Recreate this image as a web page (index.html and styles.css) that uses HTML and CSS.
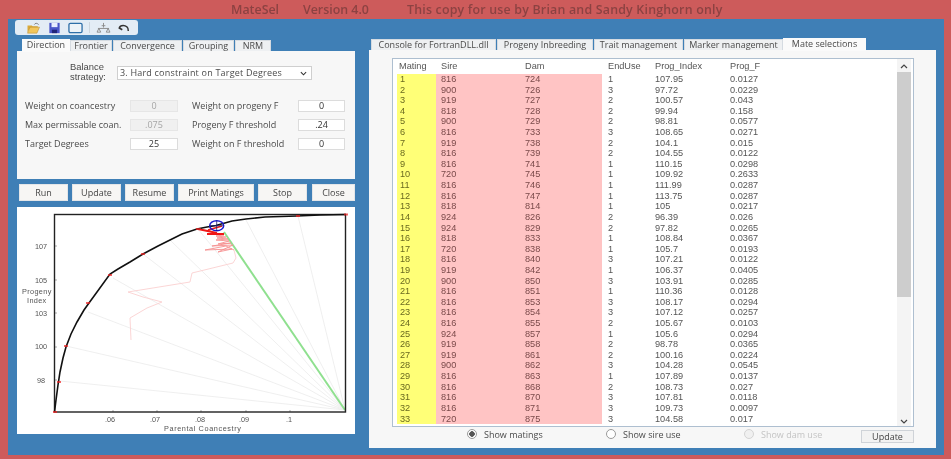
FILE: index.html
```html
<!DOCTYPE html>
<html lang="en">
<head>
<meta charset="utf-8">
<title>MateSel</title>
<link rel="stylesheet" href="styles.css">
</head>
<body>
<div class="app">
  <header class="titlebar">
    <span class="t-name">MateSel</span>
    <span class="t-ver">Version 4.0</span>
    <span class="t-copy">This copy for use by Brian and Sandy Kinghorn only</span>
  </header>
  <div class="client">
    <div class="toolbar">
      <svg class="ico" viewBox="0 0 16 14"><path d="M1 4h5l1 1h6v2H4L1 12z" fill="#d9a93a"/><path d="M4 6h11l-3 7H1z" fill="#f2c65c" stroke="#b98a2e" stroke-width=".6"/><path d="M9 3c1-2 3-2 5 0" fill="none" stroke="#555" stroke-width=".8"/></svg>
      <svg class="ico ico-save" viewBox="0 0 14 14"><path d="M1 1h12v12H1z" fill="#4a55c8"/><path d="M3.500 1h7v5h-7z" fill="#e8ecff"/><path d="M4 9h6v4H4z" fill="#20257a"/></svg>
      <svg class="ico ico-rect" viewBox="0 0 16 12"><rect x="1" y="1" width="14" height="10" rx="1.500" fill="#eef3f8" stroke="#2f6fa8" stroke-width="1.400"/></svg>
      <span class="tool-sep"></span>
      <svg class="ico ico-net" viewBox="0 0 16 13"><path d="M8 1v5M2 7h12M3 7l-2 4M3 7l2 4M13 7l-2 4M13 7l2 4M1 11h4M11 11h4M6 4h4" fill="none" stroke="#8a8a8a" stroke-width="1"/></svg>
      <svg class="ico ico-back" viewBox="0 0 14 12"><path d="M12 9.500C12.500 5 9 3 6 3S2 4 1.500 6l3.500 2" fill="none" stroke="#333" stroke-width="1.800"/></svg>
    </div>
    <div class="panes">
      <section class="left">
        <nav class="tabs tabs-left">
          <span class="tab active w-dir">Direction</span>
          <span class="tab w-fro">Frontier</span>
          <span class="tab w-con">Convergence</span>
          <span class="tab w-gro">Grouping</span>
          <span class="tab w-nrm">NRM</span>
        </nav>
        <div class="form-panel">
          <div class="strategy">
            <span class="strategy-label">Balance<br>strategy:</span>
            <div class="select">3. Hard constraint on Target Degrees
              <svg class="chev" viewBox="0 0 8 5"><path d="M1 1l3 3 3-3" fill="none" stroke="#333" stroke-width="1.200"/></svg>
            </div>
          </div>
          <div class="fields">
            <label>Weight on coancestry</label><span class="input disabled">0</span>
            <label class="col2">Weight on progeny F</label><span class="input">0</span>
            <label>Max permissable coan.</label><span class="input disabled">.075</span>
            <label class="col2">Progeny F threshold</label><span class="input">.24</span>
            <label>Target Degrees</label><span class="input">25</span>
            <label class="col2">Weight on F threshold</label><span class="input">0</span>
          </div>
        </div>
        <div class="buttons">
          <button class="btn b-49">Run</button>
          <button class="btn b-49">Update</button>
          <button class="btn b-49">Resume</button>
          <button class="btn b-77">Print Matings</button>
          <button class="btn b-49">Stop</button>
          <button class="btn b-43">Close</button>
        </div>
        <div class="chart">
          <svg class="plot" viewBox="17 207 338 227">
            <g class="rays">
              <path d="M345 410L60 381M345 410L66 346M345 410L88 312M345 410L113 278M345 410L143 254M345 410L170 240M345 410L198 229M345 410L246 220M345 410L298 216"/>
            </g>
            <path class="green" d="M224 232L345 410"/>
            <path class="traj" d="M131 340L130 318L147 308L162 302L143 297L128 292L190 282L192 273L233 263L236 258L234 250"/>
            <path class="traj2" d="M234 250L226 246L205 250L232 249L218 252L233 245L212 246L231 243L218 244L229 241L216 240L228 239L217 238L226 237L216 236L224 235L217 234"/>
            <path class="hot" d="M198 229L217 233M207 234L224 234M208 230L222 226"/>
            <g class="ticks"><path d="M113 412v-2M157 412v-2M201 412v-2M246 412v-2M290 412v-2M54 246h3M54 280h3M54 313h3M54 347h3M54 380h3"/></g>
            <rect class="frame" x="54.500" y="214.500" width="291" height="197.500"/>
            <polyline class="curve" points="54.500,412 56,400 58,385 60,372 63,358 66,347 71,334 77,322 84,310 89,303 97,292 110,274 118,269 130,262 143,254 158,246 170,240 182,234 197,229 207,227 216,225.500 232,221 246,219 265,217 297,216 320,215 346,214.500"/>
            <g class="marks"><path d="M53 412h4M57 382h4M64 346h4M86 303h4M108 275h4M141 254h4M196 229h5M296 216h4M344 214.500h4"/></g>
            <ellipse class="target" cx="216.700" cy="225.700" rx="7" ry="5"/>
            <path class="cross" d="M216.700 220.500v10.500M209.500 225.700h14"/>
            <g class="ax">
              <text x="35" y="249">107</text><text x="35" y="283">105</text><text x="35" y="316">103</text><text x="35" y="349">100</text><text x="37" y="383">98</text>
              <text class="wide" x="22" y="294">Progeny</text><text class="wide" x="27" y="302.500">Index</text>
              <text x="105" y="422">.06</text><text x="150" y="422">.07</text><text x="195" y="422">.08</text><text x="239" y="422">.09</text><text x="286" y="422">.1</text>
              <text class="wider" x="164" y="430.500">Parental Coancestry</text>
            </g>
          </svg>
        </div>
      </section>
      <section class="right">
        <nav class="tabs tabs-right">
          <span class="tab w-cons">Console for FortranDLL.dll</span>
          <span class="tab w-inb">Progeny Inbreeding</span>
          <span class="tab w-tra">Trait management</span>
          <span class="tab w-mar">Marker management</span>
          <span class="tab active w-mat">Mate selections</span>
        </nav>
        <div class="sel-panel">
          <div class="list">
            <div class="grid">
              <div class="row head"><span>Mating</span><span>Sire</span><span>Dam</span><span>EndUse</span><span>Prog_Index</span><span>Prog_F</span></div>
              <div class="row"><span>1</span><span>816</span><span>724</span><span>1</span><span>107.95</span><span>0.0127</span></div>
              <div class="row"><span>2</span><span>900</span><span>726</span><span>3</span><span>97.72</span><span>0.0229</span></div>
              <div class="row"><span>3</span><span>919</span><span>727</span><span>2</span><span>100.57</span><span>0.043</span></div>
              <div class="row"><span>4</span><span>818</span><span>728</span><span>2</span><span>99.94</span><span>0.158</span></div>
              <div class="row"><span>5</span><span>900</span><span>729</span><span>2</span><span>98.81</span><span>0.0577</span></div>
              <div class="row"><span>6</span><span>816</span><span>733</span><span>3</span><span>108.65</span><span>0.0271</span></div>
              <div class="row"><span>7</span><span>919</span><span>738</span><span>2</span><span>104.1</span><span>0.015</span></div>
              <div class="row"><span>8</span><span>816</span><span>739</span><span>2</span><span>104.55</span><span>0.0122</span></div>
              <div class="row"><span>9</span><span>816</span><span>741</span><span>1</span><span>110.15</span><span>0.0298</span></div>
              <div class="row"><span>10</span><span>720</span><span>745</span><span>1</span><span>109.92</span><span>0.2633</span></div>
              <div class="row"><span>11</span><span>816</span><span>746</span><span>1</span><span>111.99</span><span>0.0287</span></div>
              <div class="row"><span>12</span><span>816</span><span>747</span><span>1</span><span>113.75</span><span>0.0287</span></div>
              <div class="row"><span>13</span><span>818</span><span>814</span><span>1</span><span>105</span><span>0.0217</span></div>
              <div class="row"><span>14</span><span>924</span><span>826</span><span>2</span><span>96.39</span><span>0.026</span></div>
              <div class="row"><span>15</span><span>924</span><span>829</span><span>2</span><span>97.82</span><span>0.0265</span></div>
              <div class="row"><span>16</span><span>818</span><span>833</span><span>1</span><span>108.84</span><span>0.0367</span></div>
              <div class="row"><span>17</span><span>720</span><span>838</span><span>1</span><span>105.7</span><span>0.0193</span></div>
              <div class="row"><span>18</span><span>816</span><span>840</span><span>3</span><span>107.21</span><span>0.0122</span></div>
              <div class="row"><span>19</span><span>919</span><span>842</span><span>1</span><span>106.37</span><span>0.0405</span></div>
              <div class="row"><span>20</span><span>900</span><span>850</span><span>3</span><span>103.91</span><span>0.0285</span></div>
              <div class="row"><span>21</span><span>816</span><span>851</span><span>1</span><span>110.36</span><span>0.0128</span></div>
              <div class="row"><span>22</span><span>816</span><span>853</span><span>3</span><span>108.17</span><span>0.0294</span></div>
              <div class="row"><span>23</span><span>816</span><span>854</span><span>3</span><span>107.12</span><span>0.0257</span></div>
              <div class="row"><span>24</span><span>816</span><span>855</span><span>2</span><span>105.67</span><span>0.0103</span></div>
              <div class="row"><span>25</span><span>924</span><span>857</span><span>1</span><span>105.6</span><span>0.0294</span></div>
              <div class="row"><span>26</span><span>919</span><span>858</span><span>2</span><span>98.78</span><span>0.0365</span></div>
              <div class="row"><span>27</span><span>919</span><span>861</span><span>2</span><span>100.16</span><span>0.0224</span></div>
              <div class="row"><span>28</span><span>900</span><span>862</span><span>3</span><span>104.28</span><span>0.0545</span></div>
              <div class="row"><span>29</span><span>816</span><span>863</span><span>1</span><span>107.89</span><span>0.0137</span></div>
              <div class="row"><span>30</span><span>816</span><span>868</span><span>2</span><span>108.73</span><span>0.027</span></div>
              <div class="row"><span>31</span><span>816</span><span>870</span><span>3</span><span>107.81</span><span>0.0118</span></div>
              <div class="row"><span>32</span><span>816</span><span>871</span><span>3</span><span>109.73</span><span>0.0097</span></div>
              <div class="row"><span>33</span><span>720</span><span>875</span><span>3</span><span>104.58</span><span>0.017</span></div>
            </div>
            <div class="scroll">
              <svg class="arrow" viewBox="0 0 8 5"><path d="M1 4l3-3 3 3" fill="none" stroke="#444" stroke-width="1.200"/></svg>
              <div class="track"><div class="thumb"></div></div>
              <svg class="arrow" viewBox="0 0 8 5"><path d="M1 1l3 3 3-3" fill="none" stroke="#444" stroke-width="1.200"/></svg>
            </div>
          </div>
          <div class="options">
            <span class="opt o-mat"><i class="radio on"></i>Show matings</span>
            <span class="opt o-sire"><i class="radio"></i>Show sire use</span>
            <span class="opt o-dam off"><i class="radio"></i>Show dam use</span>
            <button class="btn b-upd">Update</button>
          </div>
        </div>
      </section>
    </div>
  </div>
</div>
</body>
</html>
```
FILE: styles.css
```css
* { box-sizing: border-box; }
html, body { margin: 0; padding: 0; }
body { width: 951px; height: 459px; overflow: hidden; background: #cd5b5b; }
.app {
  width: 951px; height: 459px; display: flex; flex-direction: column;
  background: #cd5b5b; font-family: "Open Sans", "Liberation Sans", sans-serif;
  font-size: 9px; color: #4a4a4a; filter: blur(0.45px);
}
.titlebar { height: 19px; display: flex; align-items: center; font-size: 12.400px; color: #8c4242; font-weight: 600; white-space: nowrap; }
.t-name { margin-left: 231px; width: 72px; }
.t-ver { width: 104px; }
.t-copy { letter-spacing: 0.2px; }
.client { margin: 0 7px 4px 8px; height: 436px; background: #3f7fb6; padding-top: 1px; }
.toolbar {
  margin-left: 7px; width: 123px; height: 15px; border-radius: 3px; background: #e3ecf5;
  display: flex; align-items: center; padding-left: 11px;
}
.ico { width: 15px; height: 12px; display: block; }
.ico-save { margin-left: 7px; width: 13px; }
.ico-rect { margin-left: 7px; }
.tool-sep { width: 1px; height: 11px; background: #cdd6df; margin: 0 6px 0 6px; }
.ico-net { width: 15px; }
.ico-back { margin-left: 7px; width: 12px; }
.panes { display: flex; margin-top: 4px; margin-left: 9px; gap: 14px; }
.left { width: 338px; }
.right { width: 567px; }
.tabs { display: flex; align-items: flex-end; height: 12px; }
.tab {
  height: 11px; background: #eef0f2; border: 1px solid #d5dbe1; border-bottom: 0; text-align: center;
  line-height: 10px; white-space: nowrap; flex: none; overflow: hidden; margin-right: 1px;
}
.tab.active { height: 13px; background: #fafafa; line-height: 10px; border-color: #fafafa; margin-bottom: -1px; }
.tabs-left { padding-left: 5px; }
.w-dir { width: 48px; margin-right: 0; }
.w-fro { width: 42px; }
.w-con { width: 69px; }
.w-gro { width: 51px; }
.w-nrm { width: 36px; }
.tabs-right { padding-left: 2px; height: 11px; }
.w-cons { width: 125px; }
.w-inb { width: 96px; }
.w-tra { width: 89px; }
.w-mar { width: 99px; margin-right: 0; }
.w-mat { width: 83px; }
.form-panel { height: 128px; background: #f7f7f7; padding: 11px 8px 0; }
.strategy { display: flex; align-items: center; padding-left: 45px; }
.strategy-label { width: 47px; line-height: 10.400px; font-family: "Liberation Sans", sans-serif; font-size: 9.400px; }
.select {
  position: relative; width: 195px; height: 14px; margin-top: 2px; background: #fff; border: 1px solid #cfcfcf;
  padding-left: 2px; line-height: 12px; letter-spacing: .2px;
}
.chev { position: absolute; right: 4px; top: 4px; width: 7px; height: 5px; }
.fields {
  display: grid; grid-template-columns: 105px 48px 120px 47px; row-gap: 7px;
  margin-top: 17px; align-items: center;
}
.fields label { white-space: nowrap; line-height: 12px; }
.fields .col2 { padding-left: 14px; }
.input {
  height: 12px; background: #fff; border: 1px solid #dcdcdc; text-align: center; line-height: 10px; color: #333;
}
.input.disabled { background: #f0f0f0; color: #a5a5a5; border-color: #e6e6e6; }
.buttons { display: flex; gap: 4px; margin: 5px 0 6px 2px; }
.btn {
  height: 17px; padding: 0; background: #f7f6f4; border: 1px solid #e4e6e8; font: inherit; color: #444;
}
.b-49 { width: 49px; }
.b-77 { width: 76px; }
.b-43 { width: 43px; margin-left: 1px; }
.chart { height: 227px; background: #fff; }
.plot { display: block; width: 338px; height: 227px; }
.rays path { fill: none; stroke: #ebebeb; stroke-width: .8; }
.green { fill: none; stroke: #8fe08f; stroke-width: 2; }
.traj { fill: none; stroke: #fbd0d0; stroke-width: .9; }
.traj2 { fill: none; stroke: #f59090; stroke-width: .9; }
.hot { fill: none; stroke: #f01818; stroke-width: 1.800; }
.ticks path { stroke: #888; stroke-width: .7; }
.frame { fill: none; stroke: #222; stroke-width: 1.400; }
.curve { fill: none; stroke: #111; stroke-width: 1.600; }
.marks path { stroke: #f02020; stroke-width: 2; opacity: .7; }
.target { fill: none; stroke: #1a1ad0; stroke-width: 1.500; }
.cross { fill: none; stroke: #202070; stroke-width: .8; }
.ax text { font-family: "Liberation Sans", sans-serif; font-size: 7.300px; fill: #555; }
.ax .wide { letter-spacing: .35px; }
.ax .wider { letter-spacing: .6px; }
.sel-panel { height: 398px; background: #f7f7f7; padding: 8px 22px 0 23px; }
.list { height: 369px; display: flex; background: #fff; border: 1px solid #aebfd0; padding-left: 4px; }
.grid { width: 500px; }
.row {
  display: grid; grid-template-columns: 39px 84px 82px 48px 75px 172px; height: 10.620px; line-height: 10.620px;
  color: #555; font-family: "Liberation Sans", sans-serif; font-size: 9.200px;
}
.row span:nth-child(1) { padding-left: 3px; background: #ffff77; color: #6a6a20; }
.row span:nth-child(2), .row span:nth-child(3) { padding-left: 5px; background: #ffc4c4; color: #7a4a4a; }
.row span:nth-child(4) { padding-left: 6px; }
.row span:nth-child(5), .row span:nth-child(6) { padding-left: 5px; }
.row.head { height: 15px; line-height: 14px; }
.row.head span { background: none; color: #555; }
.row.head span:nth-child(1) { padding-left: 2px; }
.scroll { width: 14px; margin-left: auto; margin-right: 2px; display: flex; flex-direction: column; align-items: center; background: #f4f4f4; }
.arrow { flex: none; width: 8px; height: 5px; margin: 5px 0 3px; }
.scroll .arrow:last-child { margin: 3px 0 2px; }
.track { flex: 1; width: 14px; }
.thumb { height: 225px; background: #cdcdcd; }
.options { height: 21px; display: flex; align-items: flex-start; padding-top: 2px; }
.opt { display: flex; align-items: center; white-space: nowrap; height: 10px; }
.radio { width: 10px; height: 10px; border-radius: 50%; border: 1px solid #9a9a9a; background: #fff; margin-right: 7px; flex: none; }
.radio.on { background: radial-gradient(circle, #555 0 2.500px, #fff 3px); }
.o-mat { margin-left: 75px; width: 139px; }
.o-sire { width: 138px; }
.o-dam { width: 90px; }
.off { color: #c4c4c4; }
.off .radio { border-color: #d4d4d4; background: #f0f0f0; }
.b-upd { width: 53px; height: 13px; margin-left: auto; margin-top: 1px; line-height: 10px; border-color: #cfd3d8; background: #f2f2f2; }
```
